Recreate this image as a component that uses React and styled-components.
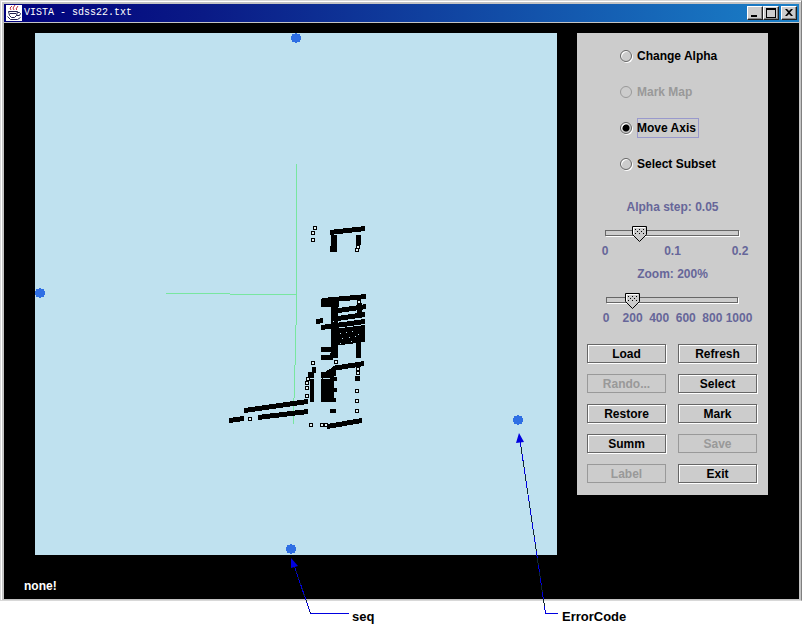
import { useState } from "react";
import styled, { createGlobalStyle, css } from "styled-components";

const modes = [
  { id: 'alpha', label: 'Change Alpha' },
  { id: 'map', label: 'Mark Map', disabled: true },
  { id: 'axis', label: 'Move Axis' },
  { id: 'subset', label: 'Select Subset' },
];

const actions = [
  { label: 'Load' },
  { label: 'Refresh' },
  { label: 'Rando...', disabled: true },
  { label: 'Select' },
  { label: 'Restore' },
  { label: 'Mark' },
  { label: 'Summ' },
  { label: 'Save', disabled: true },
  { label: 'Label', disabled: true },
  { label: 'Exit' },
];

// axis handles: x, y
const handles = [[296, 38], [40, 293], [291, 549], [518, 420]];

// runs of neighbouring records: x1, y1, x2, y2
const runs = [
  [330, 232, 365, 228],
  [322, 300, 366, 296],
  [332, 311, 366, 306],
  [337, 318, 365, 314],
  [316, 321, 323, 320],
  [321, 327, 365, 321],
  [333, 331, 365, 327],
  [333, 335, 365, 331],
  [333, 339, 365, 335],
  [333, 343, 365, 339],
  [333, 368, 364, 363],
  [322, 376, 336, 367],
  [327, 426, 362, 420],
  [244, 410, 308, 401],
  [258, 417, 308, 411],
  [229, 420, 244, 418],
];

// dense blocks: x, y, width, height
const blocks = [
  [331, 235, 6, 11], [330, 246, 7, 6],
  [356, 235, 5, 10],
  [321, 299, 18, 8], [331, 306, 7, 48],
  [357, 303, 5, 12],
  [356, 341, 5, 17],
  [321, 347, 11, 5], [321, 355, 12, 5], [330, 353, 8, 5],
  [321, 372, 9, 6], [321, 379, 9, 23], [330, 372, 4, 30],
  [334, 371, 2, 5], [334, 377, 3, 4], [334, 388, 3, 4], [334, 398, 2, 4],
  [330, 409, 6, 4],
  [312, 367, 4, 6], [308, 372, 6, 6], [310, 379, 4, 23],
  [355, 376, 5, 5],
];

// gaps that show through the dense part: x, y
const gaps = [
  [340, 333], [346, 332], [352, 331], [358, 334], [342, 338], [349, 337], [355, 336],
  [333, 321], [340, 343], [351, 341],
];

// single records: x, y
const points = [
  [315, 228], [313, 233], [313, 240],
  [358, 247], [357, 250], [359, 302],
  [313, 363], [336, 362], [358, 369], [358, 373],
  [308, 379], [307, 383], [307, 388], [307, 396],
  [357, 391], [357, 401], [357, 411],
  [250, 419], [311, 425], [322, 425], [326, 425],
];

const JavaIcon = () => (
  <svg width="16" height="16" viewBox="0 0 16 16" aria-hidden="true">
    <rect width="16" height="16" fill="#fff" />
    <g fill="none" stroke="#c03040">
      <path d="M5 5 4 3l2-2M8 5 7 3l2-3M11 5l-1-1 2-3" />
    </g>
    <g fill="none" stroke="#202050">
      <path d="M2.500 6.500h9l-1 4-2 2h-3l-2-2zM11.500 7.500h2l1 1-1 2h-3M1.500 11.500l3 3h7l3-2M4 8.500h6" />
    </g>
  </svg>
);

const Plot = () => (
  <PlotArea>
    <svg viewBox="35 33 522 522" role="img" aria-label="Star coordinates plot" shapeRendering="crispEdges">
      <g fill="none" stroke="#78e6a0">
        <path d="M296.500 164V325M295.500 325V365M294.500 365V398M293.500 398V424" />
        <path d="M166 293.500H230M230 294.500H296" />
      </g>
      {runs.map(([x1, y1, x2, y2]) => (
        <path key={`${x1}-${y1}`} d={`M${x1} ${y1 - 2}L${x2} ${y2 - 2}v5L${x1} ${y1 + 3}z`} />
      ))}
      {blocks.map(([x, y, w, h]) => (
        <rect key={`${x}-${y}`} x={x} y={y} width={w} height={h} />
      ))}
      {gaps.map(([x, y]) => (
        <rect key={`${x}-${y}`} x={x} y={y} width="1" height="1" fill="#bfe1ef" />
      ))}
      {points.map(([x, y]) => (
        <g key={`${x}-${y}`}>
          <rect x={x - 2} y={y - 2} width="4" height="4" />
          <rect x={x - 1} y={y - 1} width="2" height="2" fill="#e4f2f4" />
        </g>
      ))}
      {handles.map(([x, y]) => (
        <g key={x} fill="#2f6fe4">
          <rect x={x - 1} y={y - 5} width="2" height="10" />
          <rect x={x - 5} y={y - 2} width="10" height="4" />
          <rect x={x - 4} y={y - 4} width="8" height="8" />
        </g>
      ))}
    </svg>
  </PlotArea>
);

const RangeField = ({ id, caption, inset, max, step, value, onChange, ticks }) => (
  <RangeFieldStyled $inset={inset}>
    <label htmlFor={id}>{caption}</label>
    <Range
      id={id}
      type="range"
      min="0"
      max={max}
      step={step}
      value={value}
      onChange={e => onChange(Number(e.target.value))}
    />
    <Ticks>
      {ticks.map(tick => <span key={tick}>{tick}</span>)}
    </Ticks>
  </RangeFieldStyled>
);

const Callouts = () => (
  <CalloutLines viewBox="0 0 802 630" aria-hidden="true">
    <g fill="none" shapeRendering="crispEdges">
      <path d="M293 562 310.500 613.500" stroke="#102040" />
      <path d="M293 562 310.500 613.500" stroke="#0000e0" strokeDasharray="4 2" />
      <path d="M520 440 545.500 613.500" stroke="#102830" />
      <path d="M520 440 545.500 613.500" stroke="#0000e0" strokeDasharray="7 7" />
      <path d="M310 613.500H349M545 613.500H558" stroke="#0000e0" />
    </g>
    <path d="M291 558 291 568 298 566zM519 433 516 443 524 442z" fill="#0000e0" />
  </CalloutLines>
);

export default function App() {
  const [mode, setMode] = useState('axis');
  const [alpha, setAlpha] = useState(0.05);
  const [zoom, setZoom] = useState(200);

  return (
    <>
      <GlobalStyle />
      <Figure>
        <Window>
          <TitleBar>
            <JavaIcon />
            <h1>VISTA - sdss22.txt</h1>
            <WindowButton aria-label="Minimize">
              <svg width="12" height="10"><path d="M2 7h6v2H2z" /></svg>
            </WindowButton>
            <WindowButton aria-label="Maximize">
              <svg width="12" height="10"><path d="M1 0h10v10H1zM2 2v7h8V2z" fillRule="evenodd" /></svg>
            </WindowButton>
            <WindowButton aria-label="Close" $apart>
              <svg width="12" height="10"><path d="M2 1h2l2 2 2-2h2L7 4.500 10 8H8L6 6 4 8H2l3-3.500z" /></svg>
            </WindowButton>
          </TitleBar>
          <Body>
            <Main>
              <Plot />
              <Panel>
                <Modes>
                  {modes.map(({ id, label, disabled }) => (
                    <Mode key={id} $disabled={disabled}>
                      <input
                        type="radio"
                        name="mode"
                        checked={mode === id}
                        disabled={disabled}
                        onChange={() => setMode(id)}
                      />
                      <ModeText $active={mode === id}>{label}</ModeText>
                    </Mode>
                  ))}
                </Modes>
                <Ranges>
                  <RangeField
                    id="alpha"
                    caption={`Alpha step: ${alpha}`}
                    inset={21}
                    max={0.2}
                    step={0.01}
                    value={alpha}
                    onChange={setAlpha}
                    ticks={['0', '0.1', '0.2']}
                  />
                  <RangeField
                    id="zoom"
                    caption={`Zoom: ${zoom}%`}
                    inset={22}
                    max={1000}
                    step={10}
                    value={zoom}
                    onChange={setZoom}
                    ticks={['0', '200', '400', '600', '800', '1000']}
                  />
                </Ranges>
                <Actions>
                  {actions.map(({ label, disabled }) => (
                    <ActionButton key={label} disabled={disabled}>{label}</ActionButton>
                  ))}
                </Actions>
              </Panel>
            </Main>
            <Status>none!</Status>
          </Body>
        </Window>
        <Captions>
          <span>seq</span>
          <span>ErrorCode</span>
        </Captions>
        <Callouts />
      </Figure>
    </>
  );
}

const GlobalStyle = createGlobalStyle`
  * {
    box-sizing: border-box;
  }
  body {
    margin: 0;
    background: #fff;
    font: bold 12px/16px "Liberation Sans", Arial, sans-serif;
    color: #000;
  }
  button, input {
    font: inherit;
    margin: 0;
  }
`;

const Figure = styled.div`
  position: relative;
`;

const Window = styled.div`
  padding: 2px 1px 1px 2px;
  background: #c4c4c4;
  border: 1px solid #d8d8d8;
  border-right-color: #808080;
  box-shadow: inset 1px 1px #fff;
`;

const TitleBar = styled.header`
  display: flex;
  align-items: center;
  height: 18px;
  margin: 1px;
  padding: 0 2px;
  background: linear-gradient(to right, #00007c, #0a1a86 25%, #1a80c8);
  & h1 {
    flex: 1;
    margin: 0 0 0 2px;
    font: 10px/16px "Liberation Mono", monospace;
    color: #fff;
  }
`;

const WindowButton = styled.button`
  display: flex;
  width: 16px;
  height: 14px;
  margin-left: ${props => props.$apart ? '2px' : 0};
  padding: 1px;
  background: #ccc;
  border: 1px solid;
  border-color: #fff #202020 #202020 #fff;
  box-shadow: inset -1px -1px #888;
`;

const Body = styled.div`
  margin: 0 1px;
  padding: 10px 31px 5px;
  background: #000;
`;

const Main = styled.main`
  display: grid;
  grid-template-columns: minmax(0, 1fr) 191px;
  align-items: start;
  gap: 20px;
`;

const PlotArea = styled.div`
  background: #bfe1ef;
  & svg {
    display: block;
    width: 100%;
  }
`;

const Panel = styled.section`
  padding: 13px 0 12px;
  background: #ccc;
`;

const Modes = styled.div`
  display: grid;
  gap: 16px;
  padding-left: 43px;
`;

const Mode = styled.label`
  display: flex;
  align-items: center;
  gap: 5px;
  height: 20px;
  color: ${props => props.$disabled ? '#999' : '#000'};
  & input {
    appearance: none;
    width: 12px;
    height: 12px;
    border: 1px solid #666;
    border-radius: 50%;
    box-shadow: 1px 1px #fff, inset 1px 1px #fff;
    &:checked {
      background: radial-gradient(circle, #000 3px, transparent 4px);
    }
    &:disabled {
      border-color: #999;
      box-shadow: none;
    }
  }
`;

const ModeText = styled.span`
  height: 20px;
  padding-right: 3px;
  line-height: 20px;
  ${props => props.$active && css`
    box-shadow: inset 0 0 0 1px #9999cc;
  `}
`;

const Ranges = styled.div`
  display: grid;
  gap: 7px;
  margin-top: 25px;
`;

const RangeFieldStyled = styled.div`
  display: grid;
  padding: 0 ${props => props.$inset}px;
  color: #666699;
  text-align: center;
`;

// arrow-shaped knob with a dotted grip
const knob = `url("data:image/svg+xml,%3Csvg xmlns='http://www.w3.org/2000/svg' width='15' height='16'%3E%3Cpath d='M.5.5h14v8l-7 7-7-7z' fill='%23ccc' stroke='%23000'/%3E%3Cpath d='M1.500 8V1.500H13' fill='none' stroke='%23fff'/%3E%3Cpath d='M3 3h1v1H3zM7 3h1v1H7zM11 3h1v1h-1zM5 5h1v1H5zM9 5h1v1H9zM3 7h1v1H3zM7 7h1v1H7zM11 7h1v1h-1z'/%3E%3C/svg%3E")`;

const Range = styled.input`
  appearance: none;
  width: 100%;
  height: 16px;
  margin: 11px 0 1px;
  background:
    linear-gradient(#ccc, #ccc) 8px 5px / calc(100% - 17px) 4px no-repeat,
    linear-gradient(#666, #666) 7px 4px / calc(100% - 15px) 6px no-repeat,
    linear-gradient(#fff, #fff) 8px 5px / calc(100% - 15px) 6px no-repeat;
  &::-webkit-slider-thumb {
    appearance: none;
    width: 15px;
    height: 16px;
    background: ${knob};
  }
`;

const Ticks = styled.div`
  display: flex;
  justify-content: space-between;
  padding: 0 7px;
  & span {
    display: flex;
    justify-content: center;
    width: 0;
  }
`;

const Actions = styled.div`
  display: grid;
  grid-template-columns: 1fr 1fr;
  gap: 11px 12px;
  margin-top: 18px;
  padding: 0 11px 0 10px;
`;

const ActionButton = styled.button`
  height: 19px;
  padding: 0;
  background: #ccc;
  border: 1px solid #666;
  box-shadow: 1px 1px #fff, inset 1px 1px #fff;
  color: #000;
  &:disabled {
    border-color: #999;
    box-shadow: none;
    color: #999;
  }
`;

const Status = styled.p`
  margin: 23px 0 0 -11px;
  color: #fff;
`;

const Captions = styled.div`
  display: grid;
  grid-template-columns: 210px 1fr;
  padding: 8px 0 5px 352px;
  font-size: 13px;
`;

const CalloutLines = styled.svg`
  position: absolute;
  top: 0;
  left: 0;
  width: 100%;
  pointer-events: none;
`;
